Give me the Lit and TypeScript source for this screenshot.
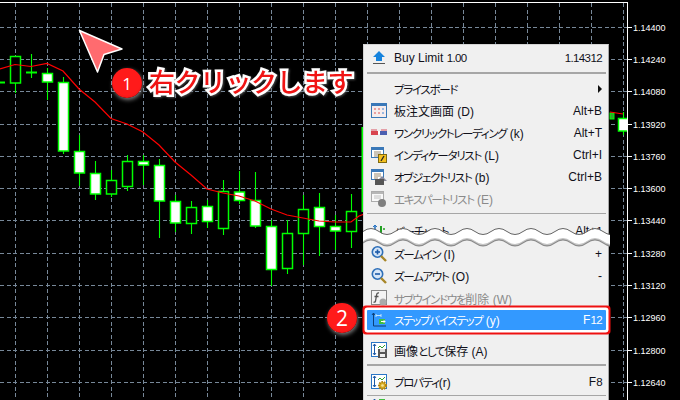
import { LitElement, html, css, svg } from "lit";
import { customElement } from "lit/decorators.js";

const gridY = [27, 59, 91, 124, 156, 188, 220, 253, 285, 317, 350, 382];
const labels = ["1.14400","1.14240","1.14080","1.13920","1.13760","1.13600","1.13440","1.13280","1.13120","1.12960","1.12800","1.12640"];
const gridX = Array.from({ length: 20 }, (_, i) => 15 + 32 * i);

// x, wickTop, wickBottom, bodyTop, bodyBottom, filled
const candles: [number, number, number, number, number, boolean][] = [
  [15, 56, 93, 56.5, 83, false],
  [31, 54, 78, 72.5, 72.5, false],
  [47, 68, 100, 73.5, 82, true],
  [63, 77, 154, 82.5, 151, true],
  [79, 135, 186, 151.5, 173, true],
  [95, 161, 200, 173.5, 194, true],
  [111, 170, 197, 180.5, 194, false],
  [127, 155, 191, 161.5, 186.5, false],
  [143, 155, 185, 161.5, 165, true],
  [159, 159, 238, 165.5, 201, true],
  [175, 195, 232, 201.5, 223, true],
  [191, 201, 234, 207.5, 223.5, false],
  [207, 200, 228, 206.5, 221.5, true],
  [223, 180, 235, 191.5, 228.5, false],
  [239, 171, 204, 192, 200.5, true],
  [255, 172, 228, 200.5, 226, true],
  [271, 220, 286, 226.5, 269.5, true],
  [287, 220, 274, 233.5, 268.5, false],
  [303, 195, 265, 209.5, 233.5, false],
  [319, 193, 256, 207.5, 226.5, true],
  [335, 215, 250, 226.5, 231, true],
  [351, 194, 248, 211.5, 231.5, false],
  [623, 112, 135, 118.5, 131, true],
];

const ma = "0,69 15,64.5 31,66.5 47,63.5 63,71 79,89 95,102 111,118.5 127,124 143,132 159,145 175,162 191,175 207,189 223,193 239,196 255,201 271,209 287,215 303,218 319,221 335,222 351,222 359,216 367,213";

function wave(dir: number, n: number, startSeg: string) {
  const seg = Array(n).fill("t16 0").join(" ");
  return `${startSeg} q8 ${dir * 6} 16 0 ${seg}`;
}
const tearTop = wave(-1, 15, "M0 8");
const tearBand = `${tearTop} V17 q-8 ${6} -16 0 ${Array(15).fill("t-16 0").join(" ")} Z`;

@customElement("ic-on")
class IcOn extends LitElement {
  static properties = { name: {} };
  declare name: string;
  static styles = css`
    :host { display: block; width: 16px; height: 16px; }
    svg { display: block; }
  `;
  paint() {
    const list = svg`<rect x=".5" y=".5" width="12" height="10" fill="#fff" stroke="#3a78b8"/><rect x="1" y="1" width="11" height="2" fill="#3a78b8"/><path d="M3 5h7M3 7h7M3 9h4" stroke="#9a8a70"/>`;
    switch (this.name) {
      case "buy":
        return svg`<path d="M8 1l6 6h-3v4H5V7H2z" fill="#1583dd"/><rect x="2" y="13" width="12" height="1" fill="#555"/>`;
      case "board":
        return svg`<rect x=".5" y=".5" width="15" height="14" fill="#f6ecec" stroke="#3a78b8"/><rect x="1" y="1" width="14" height="2" fill="#3a78b8"/><path d="M3 5h2v2H3zM3 9h2v2H3zM7 5h2v2H7zM7 9h2v2H7z" fill="#eaa0a0"/><path d="M11 5h2v2h-2zM11 9h2v2h-2z" fill="#9ab8e0"/>`;
      case "click":
        return svg`<rect x="0" y="4" width="7" height="6" fill="#d8454f"/><rect x="9" y="4" width="7" height="6" fill="#4b5fb0"/><rect x="0" y="4" width="16" height="2" fill="#e4a0a8"/><rect x="6" y="4" width="4" height="2" fill="#eee"/><rect x="7" y="6" width="2" height="3" fill="#fff"/>`;
      case "ind":
        return svg`${list}<rect x="7.5" y="7.5" width="8" height="8" fill="#f4c020" stroke="#806a10"/><path d="M13 9l-3 5" stroke="#222" stroke-width="1.3"/>`;
      case "obj":
        return svg`${list}<path d="M11 7l5 5H6z" fill="#889"/><rect x="4" y="10" width="9" height="6" fill="#555"/>`;
      case "exp":
        return svg`<g opacity=".65"><rect x=".5" y=".5" width="12" height="10" fill="#fff" stroke="#888"/><rect x="1" y="1" width="11" height="2" fill="#999"/><path d="M3 5h7M3 7h7" stroke="#aaa"/><circle cx="11" cy="12" r="4" fill="#444"/></g>`;
      case "bar":
        return svg`<path d="M4 2v13" stroke="#2a76c6" stroke-width="1.6"/><path d="M2 4l2-2 2 2" stroke="#2a76c6" fill="none"/><path d="M10 3v12" stroke="#20a020" stroke-width="2"/><path d="M12 6h2M8 11h2" stroke="#20a020" stroke-width="1.6"/>`;
      case "zin":
      case "zout":
        return svg`<circle cx="6.5" cy="6" r="5.2" fill="#d6e6f8" stroke="#2e6fb8" stroke-width="1.6"/><path d="M4 6h5" stroke="#1c5aa8" stroke-width="1.6"/>${this.name === "zin" ? svg`<path d="M6.5 3.5v5" stroke="#1c5aa8" stroke-width="1.6"/>` : ""}<path d="M10 10l5 5" stroke="#a88628" stroke-width="2.4"/>`;
      case "fx":
        return svg`<rect x=".5" y=".5" width="15" height="14" fill="#f4f4f4" stroke="#888"/><path d="M8 3q-2-.5-2.4 2L4.5 11q-.4 1.6-2 1M3.5 6.5h4" stroke="#555" stroke-width="1.3" fill="none"/><circle cx="12" cy="12" r="3.5" fill="#aaa"/>`;
      case "step":
        return svg`<path d="M2.500 1v13H15" stroke="#0c3f78" fill="none"/><path d="M1 3l1.500-2L4 3" stroke="#0c3f78" fill="none"/><path d="M5 3.500h5M5 2v3M10 2v3" stroke="#bfe0fa"/><rect x="8" y="7" width="6" height="5" fill="#40c040"/><path d="M10 9.500h4M12.500 8l1.500 1.500-1.500 1.500" stroke="#fff"/>`;
      case "save":
      case "prop":
        return svg`<rect x=".5" y=".5" width="15" height="14" fill="#fff" stroke="#2a76c6"/><path d="M3.500 2v11M2 4l1.500-2L5 4M2 11l1.500 2L5 11" stroke="#1c5aa8" fill="none"/><path d="M7 6l2-2 2 2 3-3" stroke="#30a030" fill="none"/>${this.name === "save"
          ? svg`<rect x="7" y="7" width="9" height="9" fill="#555"/><rect x="9" y="7" width="5" height="3" fill="#ddd"/><rect x="9" y="12" width="5" height="3" fill="#eee"/>`
          : svg`<circle cx="11.500" cy="11.500" r="3.500" fill="#d8ac20" stroke="#b08010" stroke-width="2" stroke-dasharray="1.500 1"/><circle cx="11.500" cy="11.500" r="1.300" fill="#f6e6a0"/>`}`;
      case "auto":
        return svg`<path d="M3.500 2v13" stroke="#1c5aa8"/><path d="M2 4l1.500-2L5 4" stroke="#1c5aa8" fill="none"/><rect x="8" y="2" width="6" height="5" fill="#40c040"/>`;
      default:
        return svg``;
    }
  }
  render() {
    return html`<svg width="16" height="16" viewBox="0 0 16 16">${this.paint()}</svg>`;
  }
}

type Item = { icon?: string; label: string; key?: string; off?: boolean; arrow?: boolean; active?: boolean };

@customElement("app-root")
export class AppRoot extends LitElement {
  static styles = css`
    :host {
      display: block;
      position: relative;
      width: 680px;
      height: 400px;
      overflow: hidden;
      background: #000;
    }
    .chart { display: block; }
    .ax {
      font: 9px "Liberation Sans", Arial, sans-serif;
      fill: #fff;
    }
    .menu {
      position: absolute;
      left: 363px;
      top: 44px;
      width: 246px;
      height: 380px;
      box-sizing: border-box;
      padding: 2px 2px 0 3px;
      background: #f0f0f0;
      border: 1px solid #d4d4d4;
      border-right-color: #a8a8a8;
      font: 12px "Liberation Sans", "Noto Sans CJK JP", sans-serif;
      font-feature-settings: "palt";
      color: #10101a;
      display: flex;
      flex-direction: column;
    }
    .kana { font-size: 11.5px; letter-spacing: -1.3px; }
    .num { font-size: 11.5px; letter-spacing: -.6px; }
    .row {
      flex: none;
      height: 22px;
      display: flex;
      align-items: center;
      padding: 0 4px;
      white-space: nowrap;
    }
    .row ic-on { margin-right: 7px; flex: none; }
    .slot { width: 16px; height: 16px; margin-right: 7px; flex: none; }
    .label { flex: 1; }
    .off { color: #8a8a8a; }
    .tri {
      width: 0; height: 0;
      border-left: 4px solid #111;
      border-top: 4px solid transparent;
      border-bottom: 4px solid transparent;
    }
    .sep { flex: none; height: 1.5px; background: #a6a6a6; margin: 3px 0 4px; }
    .sep.s2 { margin-bottom: 6px; }
    .sep.s3 { margin-bottom: 5px; }
    .sep.s4 { margin: 2px 0 -2px; }
    .gap1 { flex: none; height: 1px; }
    .row.active {
      height: 20px;
      margin: 1px 0 9px;
      background: #3399ff;
      color: #fff;
      border-radius: 1px;
      box-shadow: 0 0 0 2.5px #fff, 0 0 0 4.5px #ee1111;
    }
    .tear {
      position: absolute;
      left: 363px;
      top: 224px;
      display: block;
    }
    .arrow { position: absolute; left: 70px; top: 22px; display: block; }
    .badge {
      position: absolute;
      width: 30px;
      height: 30px;
      border-radius: 50%;
      background: radial-gradient(circle at 50% 45%, #ff1a1a 60%, #d80f0f);
      box-shadow: 1px 2px 4px rgba(190, 190, 190, .65);
      color: #fff;
      font: 500 20px "Open Sans", sans-serif;
      display: flex;
      align-items: center;
      justify-content: center;
    }
    .b1 { left: 112px; top: 68px; font-size: 17px; }
    .b2 { left: 327px; top: 303px; font-size: 21px; }
    .callout {
      position: absolute;
      left: 149px;
      top: 62px;
      font: 500 26px "Noto Sans CJK JP", sans-serif;
      line-height: 38px;
      letter-spacing: -.5px;
      white-space: nowrap;
      color: #f01414;
      -webkit-text-stroke: 5px #fff;
      paint-order: stroke fill;
      filter: drop-shadow(1px 1px 1px rgba(120,120,120,.6));
    }
  `;

  private label(text: string) {
    return text
      .split(/([\u3040-\u30ff]+|[0-9.]+)/)
      .map((part, i) =>
        i % 2 ? html`<span class=${/^[0-9.]/.test(part) ? "num" : "kana"}>${part}</span>` : part
      );
  }

  private items(list: Item[]) {
    return list.map(
      (i) => html`<div class="row ${i.off ? "off" : ""} ${i.active ? "active" : ""}">
        ${i.icon ? html`<ic-on .name=${i.icon}></ic-on>` : html`<div class="slot"></div>`}
        <span class="label">${this.label(i.label)}</span>
        ${i.arrow ? html`<span class="tri"></span>` : html`<span>${this.label(i.key ?? "")}</span>`}
      </div>`
    );
  }

  render() {
    return html`
      <svg class="chart" width="680" height="400" viewBox="0 0 680 400">
        <g stroke="#778899" stroke-width="1" stroke-dasharray="4 2.5" shape-rendering="crispEdges">
          ${gridX.map((x) => svg`<line x1=${x + 0.5} y1="3" x2=${x + 0.5} y2="400"/>`)}
          ${gridY.map((y) => svg`<line x1="0" y1=${y + 0.5} x2="627" y2=${y + 0.5}/>`)}
        </g>
        <g stroke="#00ff00">
          ${candles.map(
            ([x, t, b, bt, bb, f]) => svg`
              <line x1=${x + 0.5} y1=${t} x2=${x + 0.5} y2=${b} stroke-width="1.1"/>
              ${bb - bt < 1
                ? svg`<line x1=${x - 5} y1=${bt} x2=${x + 6} y2=${bt} stroke-width="2"/>`
                : svg`<rect x=${x - 5 + 0.5} y=${bt} width="10" height=${bb - bt} fill=${f ? "#fff" : "#000"} stroke-width="1.5"/>`}`
          )}
          <line x1="0" y1="82.5" x2="5" y2="82.5" stroke-width="2"/>
          <rect x="610" y="113" width="4" height="6" fill="#2fa52f"/>
          <line x1="362.5" y1="127" x2="362.5" y2="212" stroke-width="2"/>
        </g>
        <polyline points=${ma} fill="none" stroke="#ff0000" stroke-width="1.2"/>
        <polyline points="610,112 623,114" fill="none" stroke="#ff0000" stroke-width="1.2"/>
        <rect x="628" y="112" width="4" height="24" fill="#000"/>
        <rect x="0" y="2" width="627.5" height="1" fill="#fff"/>
        <rect x="627" y="2" width="1" height="398" fill="#fff"/>
        ${gridY.map(
          (y, i) => svg`<rect x="628" y=${y} width="4" height="1" fill="#fff"/>
            <text class="ax" x="633" y=${y + 4}>${labels[i]}</text>`
        )}
      </svg>

      <div class="menu">
        ${this.items([{ icon: "buy", label: "Buy Limit 1.00", key: "1.14312" }])}
        <div class="sep"></div>
        ${this.items([
          { label: "プライスボード", arrow: true },
          { icon: "board", label: "板注文画面 (D)", key: "Alt+B" },
          { icon: "click", label: "ワンクリックトレーディング (k)", key: "Alt+T" },
          { icon: "ind", label: "インディケータリスト (L)", key: "Ctrl+I" },
          { icon: "obj", label: "オブジェクトリスト (b)", key: "Ctrl+B" },
          { icon: "exp", label: "エキスパートリスト (E)", off: true },
        ])}
        <div class="sep s2"></div>
        ${this.items([{ icon: "bar", label: "バーチャート", key: "Alt+1" }])}
        <div class="gap1"></div>
        ${this.items([
          { icon: "zin", label: "ズームイン (I)", key: "+" },
          { icon: "zout", label: "ズームアウト (O)", key: "-" },
          { icon: "fx", label: "サブウインドウを削除 (W)", off: true },
          { icon: "step", label: "ステップバイステップ (y)", key: "F12", active: true },
          { icon: "save", label: "画像として保存 (A)" },
        ])}
        <div class="sep s3"></div>
        ${this.items([{ icon: "prop", label: "プロパティ(r)", key: "F8" }])}
        <div class="sep s4"></div>
        ${this.items([{ icon: "auto", label: "自動スクロール (S)" }])}
      </div>

      <svg class="tear" width="247" height="28" viewBox="0 0 247 28">
        <path d=${tearBand} fill="#8a8a8a" transform="translate(0 2.5)"/>
        <path d=${tearBand} fill="#c4c4c4" transform="translate(0 1.2)"/>
        <path d=${tearBand} fill="#fff"/>
        <path d=${tearTop} fill="none" stroke="#666" stroke-width="1" transform="translate(0 -.5)"/>
      </svg>

      <svg class="arrow" width="60" height="60" viewBox="70 22 60 60">
        <path d="M79.5 30.5L122 49L104 54.5L97.5 72Z" fill="#ff6b6f" stroke="#fff" stroke-width="1.5" stroke-linejoin="round"/>
      </svg>
      <div class="badge b1">1</div>
      <div class="callout">右クリックします</div>
      <div class="badge b2">2</div>
    `;
  }
}
